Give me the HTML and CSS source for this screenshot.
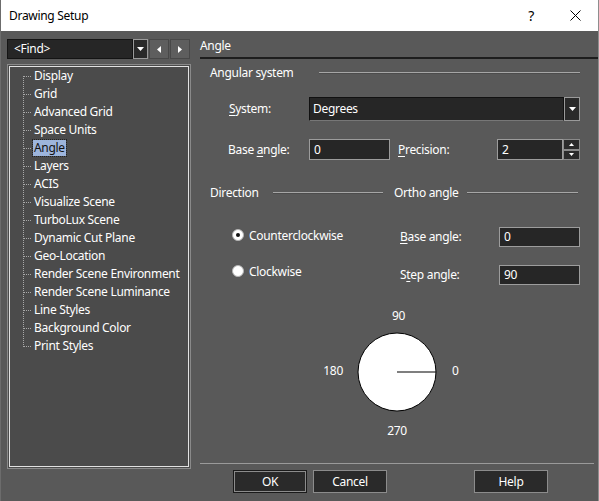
FILE: index.html
```html
<!DOCTYPE html>
<html lang="en">
<head>
    <meta charset="UTF-8">
    <title>Drawing Setup</title>
    <link rel="stylesheet" href="styles.css">
</head>
<body>
<div class="window">
    <div class="titlebar">
        <span class="title">Drawing Setup</span>
        <span class="help">?</span>
        <svg class="close" width="11" height="11" viewBox="0 0 11 11"><path d="M0.5 0.5 L10.5 10.5 M10.5 0.5 L0.5 10.5" stroke="#000" stroke-width="1"/></svg>
    </div>

    <div class="main">
        <div class="sidebar">
            <div class="find-row">
                <div class="find">
                    <span class="find-field">&lt;Find&gt;</span>
                    <span class="drop"><svg width="7" height="4"><path d="M0 0 H7 L3.5 4 Z" fill="#fff"/></svg></span>
                </div>
                <span class="nav"><svg width="4" height="7"><path d="M4 0 V7 L0 3.5 Z" fill="#fff"/></svg></span>
                <span class="nav"><svg width="4" height="7"><path d="M0 0 V7 L4 3.5 Z" fill="#fff"/></svg></span>
            </div>
            <div class="tree">
                <div class="tree-inner">
                    <ul>
                        <li>Display</li>
                        <li>Grid</li>
                        <li>Advanced Grid</li>
                        <li>Space Units</li>
                        <li><span class="sel">Angle</span></li>
                        <li>Layers</li>
                        <li>ACIS</li>
                        <li>Visualize Scene</li>
                        <li>TurboLux Scene</li>
                        <li>Dynamic Cut Plane</li>
                        <li>Geo-Location</li>
                        <li>Render Scene Environment</li>
                        <li>Render Scene Luminance</li>
                        <li>Line Styles</li>
                        <li>Background Color</li>
                        <li>Print Styles</li>
                    </ul>
                </div>
            </div>
        </div>

        <div class="panel">
            <div class="panel-head">Angle</div>

            <div class="group angular">
                <span class="group-label">Angular system</span>
                <span class="rule"></span>
            </div>

            <div class="row system-row">
                <span class="label system-label"><u>S</u>ystem:</span>
                <div class="select">
                    <span class="field">Degrees</span>
                    <span class="drop"><svg width="7" height="4"><path d="M0 0 H7 L3.5 4 Z" fill="#fff"/></svg></span>
                </div>
            </div>

            <div class="row base-row">
                <span class="label base-label">Base <u>a</u>ngle:</span>
                <span class="input base-input">0</span>
                <span class="label prec-label"><u>P</u>recision:</span>
                <span class="input prec-input">2</span>
                <span class="spin">
                    <span class="spin-btn"><svg width="5" height="3"><path d="M0 3 H5 L2.5 0 Z" fill="#fff"/></svg></span>
                    <span class="spin-btn"><svg width="5" height="3"><path d="M0 0 H5 L2.5 3 Z" fill="#fff"/></svg></span>
                </span>
            </div>

            <div class="group direction">
                <span class="group-label dir-label">Direction</span>
                <span class="rule dir-rule"></span>
                <span class="group-label ortho-label">Ortho angle</span>
                <span class="rule"></span>
            </div>

            <div class="options">
                <div class="radios">
                    <div class="radio-row"><span class="radio checked"></span>Counterclockwise</div>
                    <div class="radio-row"><span class="radio"></span>Clockwise</div>
                </div>
                <div class="ortho">
                    <div class="ortho-row">
                        <span class="label ortho-field"><u>B</u>ase angle:</span>
                        <span class="input ortho-input">0</span>
                    </div>
                    <div class="ortho-row">
                        <span class="label ortho-field">S<u>t</u>ep angle:</span>
                        <span class="input ortho-input">90</span>
                    </div>
                </div>
            </div>

            <div class="dial">
                <span class="dial-top">90</span>
                <span class="dial-left">180</span>
                <svg class="dial-face" width="80" height="80" viewBox="0 0 80 80">
                    <circle cx="40" cy="40" r="39" fill="#fff" stroke="#000" stroke-width="1"/>
                    <line x1="40" y1="40" x2="79" y2="40" stroke="#000" stroke-width="1.2"/>
                </svg>
                <span class="dial-right">0</span>
                <span class="dial-bottom">270</span>
            </div>

            <div class="footer">
                <button class="btn default">OK</button>
                <button class="btn">Cancel</button>
                <button class="btn help-btn">Help</button>
            </div>
        </div>
    </div>
</div>
</body>
</html>
```

FILE: styles.css
```css
* {
    box-sizing: border-box;
}
body {
    margin: 0;
    background: #595959;
    font-family: "Noto Sans", sans-serif;
    font-size: 12px;
    letter-spacing: -0.3px;
    color: #fff;
}
u {
    text-decoration-thickness: 1px;
    text-underline-offset: 2px;
}
.window {
    width: 599px;
    height: 501px;
    background: #595959;
    border-left: 1px solid #6c6c6c;
    border-right: 1px solid #8e8e8e;
    display: flex;
    flex-direction: column;
    overflow: hidden;
}

/* title bar */
.titlebar {
    height: 31px;
    flex: none;
    background: #fff;
    color: #000;
    display: flex;
    align-items: center;
    padding-left: 8px;
}
.title {
    flex: 1;
}
.help {
    font-size: 14px;
    margin-right: 36px;
}
.close {
    margin-right: 17px;
}

.main {
    flex: 1;
    display: flex;
}

/* left column */
.sidebar {
    width: 191px;
    flex: none;
    padding: 8px 0 0 6px;
}
.find-row {
    display: flex;
    height: 20px;
}
.find {
    width: 141px;
    display: flex;
}
.find-field {
    flex: 1;
    background: #262626;
    border: 1px solid #141414;
    padding-left: 6px;
    line-height: 18px;
}
.drop {
    width: 15px;
    border: 1px solid #9a9a9a;
    background: #2a2a2a;
    display: flex;
    align-items: center;
    justify-content: center;
}
.nav {
    width: 20px;
    height: 20px;
    margin-left: 1px;
    background: #5e5e5e;
    border: 1px solid #484848;
    display: flex;
    align-items: center;
    justify-content: center;
}
.tree {
    margin-top: 5px;
    width: 184px;
    height: 405px;
    border: 1px solid #8a8a8a;
    padding: 1px;
    background: #4b4b4b;
}
.tree-inner {
    height: 100%;
    border: 1px solid #e2e2e2;
}
.tree ul {
    list-style: none;
    margin: 0;
    padding: 0 0 0 13px;
    position: relative;
}
.tree ul::before {
    content: "";
    position: absolute;
    left: 13px;
    top: 9px;
    bottom: 8px;
    border-left: 1px dotted #a8a8a8;
}
.tree li {
    height: 18px;
    line-height: 18px;
    padding-left: 11px;
    position: relative;
}
.tree li::before {
    content: "";
    position: absolute;
    left: 0;
    top: 9px;
    width: 8px;
    border-top: 1px dotted #a8a8a8;
}
.sel {
    display: inline-block;
    line-height: 16px;
    padding: 0 1px;
    margin-left: -1px;
    background: #9db5dc;
    color: #111;
    outline: 1px dotted #222;
}

/* right panel */
.panel {
    flex: 1;
    display: flex;
    flex-direction: column;
    margin-left: 8px;
}
.panel-head {
    padding-top: 7px;
    line-height: 16px;
    padding-bottom: 3px;
    border-bottom: 2px solid #1d1d1d;
}
.group {
    display: flex;
    align-items: center;
    line-height: 16px;
    padding-left: 10px;
    margin-right: 18px;
}
.angular {
    margin-top: 6px;
}
.angular .group-label {
    width: 109px;
}
.rule {
    flex: 1;
    height: 2px;
    border-top: 1px solid #a6a6a6;
    border-bottom: 1px solid #4c4c4c;
}
.direction {
    margin-top: 25px;
    margin-right: 20px;
}
.dir-label {
    width: 63px;
}
.dir-rule {
    flex: none;
    width: 110px;
}
.ortho-label {
    margin-left: 11px;
    width: 73px;
}

.row {
    display: flex;
    align-items: center;
}
.label {
    line-height: 16px;
}
.system-row {
    margin-top: 16px;
    padding-left: 29px;
}
.system-label {
    width: 80px;
}
.select {
    width: 271px;
    height: 24px;
    display: flex;
}
.select .field {
    flex: 1;
    background: #262626;
    border: 1px solid #111;
    border-bottom-color: #777;
    padding-left: 3px;
    line-height: 21px;
}
.select .drop {
    width: 16px;
}
.base-row {
    margin-top: 18px;
    padding-left: 28px;
}
.base-label {
    width: 81px;
}
.input {
    height: 21px;
    background: #262626;
    border: 1px solid #9c9c9c;
    padding-left: 4px;
    line-height: 19px;
}
.base-input {
    width: 81px;
}
.prec-label {
    margin-left: 8px;
    width: 99px;
}
.prec-input {
    width: 66px;
}
.spin {
    display: flex;
    flex-direction: column;
    width: 17px;
    height: 21px;
}
.spin-btn {
    flex: 1;
    background: #2a2a2a;
    border: 1px solid #8a8a8a;
    display: flex;
    align-items: center;
    justify-content: center;
}

/* direction + ortho */
.options {
    display: flex;
}
.radios {
    width: 200px;
    padding-left: 32px;
    padding-top: 25px;
}
.radio-row {
    display: flex;
    align-items: center;
    height: 18px;
    margin-bottom: 18px;
}
.radio {
    width: 12px;
    height: 12px;
    border-radius: 50%;
    background: #fff;
    border: 1px solid #b4b4b4;
    margin-right: 5px;
    display: flex;
    align-items: center;
    justify-content: center;
}
.radio.checked::after {
    content: "";
    width: 4px;
    height: 4px;
    border-radius: 50%;
    background: #111;
}
.ortho {
    padding-top: 26px;
}
.ortho-row {
    display: flex;
    align-items: center;
    margin-bottom: 18px;
}
.ortho-field {
    width: 99px;
}
.ortho-input {
    width: 81px;
    height: 20px;
    line-height: 18px;
}

/* dial */
.dial {
    display: grid;
    grid-template-columns: 40px 80px 40px;
    grid-template-rows: 16px 80px 16px;
    row-gap: 8px;
    margin-top: 5px;
    margin-left: 117px;
    line-height: 16px;
}
.dial-top {
    grid-column: 2;
    grid-row: 1;
    text-align: center;
    padding-left: 3px;
}
.dial-left {
    grid-column: 1;
    grid-row: 2;
    align-self: center;
    text-align: right;
    padding-right: 14px;
    margin-top: -3px;
}
.dial-face {
    grid-column: 2;
    grid-row: 2;
}
.dial-right {
    grid-column: 3;
    grid-row: 2;
    align-self: center;
    padding-left: 15px;
    margin-top: -3px;
}
.dial-bottom {
    grid-column: 2;
    grid-row: 3;
    text-align: center;
    margin-top: 3px;
}

/* buttons */
.footer {
    margin-top: auto;
    margin-right: 4px;
    border-top: 1px solid #9a9a9a;
    padding: 6px 0 8px 33px;
    display: flex;
}
.btn {
    width: 74px;
    height: 23px;
    background: #2a2a2a;
    border: 1px solid #8c8c8c;
    color: #fff;
    font-family: inherit;
    font-size: 12px;
    letter-spacing: inherit;
    padding: 0;
    margin-right: 6px;
}
.btn.default {
    border-color: #1a1a1a;
    box-shadow: inset 0 0 0 1px #8c8c8c;
}
.help-btn {
    margin-left: 81px;
}
```
